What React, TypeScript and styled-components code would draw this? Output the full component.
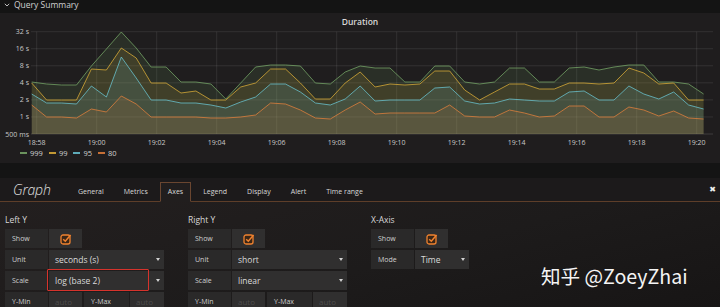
import styled, { createGlobalStyle } from "styled-components"

const GlobalStyle = createGlobalStyle`
  html, body {
    margin: 0;
    padding: 0;
    background: #141414;
  }
  body {
    width: 720px;
    height: 307px;
    overflow: hidden;
    font-family: "Open Sans", "Liberation Sans", sans-serif;
    color: #d8d8d8;
  }
`

// chart geometry (page pixels)
const PLOT_TOP = 31.7
const PLOT_BOTTOM = 134
const PLOT_LEFT = 31
const PLOT_RIGHT = 713
const STEP_Y = (PLOT_BOTTOM - PLOT_TOP) / 6
const FIRST_X = 31.7
const STEP_X = 14.93

const yTicks = ["32 s", "16 s", "8 s", "4 s", "2 s", "1 s", "500 ms"]
const xTicks = [
  "18:58", "19:00", "19:02", "19:04", "19:06", "19:08",
  "19:10", "19:12", "19:14", "19:16", "19:18", "19:20",
]

// y positions of each sample (one every 30s), read off the log2 scale
const series = [
  {
    name: "999",
    color: "#7eb26d",
    points: [82, 84, 85, 85, 66, 49, 32, 48, 67, 67, 82, 82, 84, 99, 83, 67, 65, 65, 66, 83, 84, 72, 66, 68, 68, 82, 82, 66, 66, 82, 84, 82, 68, 68, 82, 82, 68, 67, 70, 67, 65, 65, 82, 82, 84, 94],
  },
  {
    name: "99",
    color: "#eab839",
    points: [83, 100, 100, 100, 69, 70, 48, 58, 83, 83, 93, 91, 100, 100, 87, 83, 69, 69, 83, 99, 99, 83, 72, 87, 84, 85, 84, 71, 71, 90, 100, 92, 84, 84, 89, 89, 83, 83, 84, 83, 68, 73, 84, 83, 100, 100],
  },
  {
    name: "95",
    color: "#6ed0e0",
    points: [94, 103, 103, 104, 86, 97, 57, 78, 100, 100, 103, 103, 105, 108, 102, 97, 84, 84, 92, 103, 105, 99, 86, 101, 100, 100, 100, 88, 87, 101, 104, 103, 99, 100, 101, 101, 92, 91, 100, 100, 86, 94, 99, 92, 105, 109],
  },
  {
    name: "80",
    color: "#ef843c",
    points: [105, 117, 117, 118, 109, 112, 96, 104, 117, 117, 117, 117, 118, 118, 117, 115, 103, 104, 110, 118, 119, 110, 102, 114, 113, 113, 113, 113, 105, 116, 117, 117, 110, 113, 117, 116, 106, 106, 117, 117, 107, 110, 116, 111, 118, 119],
  },
]

const QueryRow = styled.div`
  display: flex;
  align-items: center;
  gap: 4px;
  height: 9px;
  margin-bottom: 4px;
  padding-left: 4px;
  font-size: 8.5px;
  line-height: 9px;
  color: #d0d0d0;
`

const Panel = styled.section`
  height: 150px;
  background: #1f1d1e;
  display: flex;
  flex-direction: column;
`

const PanelTitle = styled.div`
  padding-top: 3px;
  height: 12px;
  line-height: 12px;
  text-align: center;
  font-size: 8.5px;
  font-weight: 600;
  color: #d8d8d8;
`

const ChartSvg = styled.svg`
  display: block;
  width: 720px;
  height: 119px;
`

const Legend = styled.div`
  display: flex;
  align-items: center;
  height: 12px;
  padding-left: 20px;
  gap: 4px;
  font-size: 7.5px;
  color: #d0d0d0;
`

const LegendItem = styled.div`
  display: flex;
  align-items: center;
  gap: 3px;
  margin-right: 2px;
`

const LegendSwatch = styled.span<{ $color: string }>`
  width: 7px;
  height: 2px;
  background: ${(p) => p.$color};
  opacity: 0.8;
`

const Editor = styled.section`
  margin-top: 15px;
`

const EditorHeader = styled.div`
  display: flex;
  align-items: flex-end;
  height: 23px;
  background: #1c1a1b;
  border-bottom: 1px solid #5e3e29;
`

const EditorTitle = styled.div`
  width: 70px;
  padding-left: 13px;
  box-sizing: border-box;
  align-self: center;
  font-size: 14px;
  letter-spacing: -0.2px;
  font-style: italic;
  font-weight: 300;
  color: #e0e0e0;
`

const Tab = styled.div<{ $active?: boolean }>`
  height: 18px;
  line-height: 18px;
  padding: 0 7px;
  margin-right: 4px;
  margin-bottom: -1px;
  font-size: 7px;
  color: #d8d8d8;
  border: 1px solid ${(p) => (p.$active ? "#6a4630" : "transparent")};
  border-bottom: 1px solid ${(p) => (p.$active ? "#211e1e" : "transparent")};
  background: ${(p) => (p.$active ? "#211e1e" : "transparent")};
`

const CloseButton = styled.div`
  margin-left: auto;
  align-self: center;
  padding-right: 4px;
  font-family: "DejaVu Sans", sans-serif;
  font-size: 8px;
  font-weight: bold;
  color: #f0f0f0;
`

const EditorBody = styled.div`
  position: relative;
  display: flex;
  gap: 24px;
  height: 105px;
  padding: 0 5px;
  background: linear-gradient(165deg, #231f1f 0%, #1d1b1b 55%, #171515 100%);
`

const Section = styled.div`
  width: 159px;
`

const SectionTitle = styled.div`
  margin-top: 12px;
  margin-bottom: 3px;
  height: 12px;
  line-height: 12px;
  font-size: 8.5px;
  color: #d8d8d8;
`

const FormRow = styled.div`
  display: flex;
  gap: 1px;
  height: 19px;
  margin-bottom: 2px;
`

const FormLabel = styled.div<{ $width?: number; $gap?: number }>`
  width: ${(p) => p.$width ?? 43}px;
  margin-left: ${(p) => p.$gap ?? 0}px;
  padding-left: 7px;
  box-sizing: border-box;
  line-height: 19px;
  font-size: 7px;
  color: #cfcfcf;
  background: #2a2929;
`

const FormField = styled.div<{ $width: number }>`
  position: relative;
  width: ${(p) => p.$width}px;
  box-sizing: border-box;
  padding-left: 6px;
  line-height: 19px;
  font-size: 8.5px;
  color: #dadada;
  background: #302f2f;
`

const Select = styled(FormField)`
  &::after {
    content: "";
    position: absolute;
    right: 4px;
    top: 8px;
    border-left: 2.5px solid transparent;
    border-right: 2.5px solid transparent;
    border-top: 3px solid #d0d0d0;
  }
`

const Placeholder = styled.span`
  color: #4e4c4c;
  font-size: 8px;
`

const CheckCell = styled(FormField)`
  display: flex;
  align-items: center;
  justify-content: center;
  padding-left: 0;
`

const Highlight = styled.span`
  position: absolute;
  left: -2px;
  top: -2px;
  width: 102px;
  height: 22px;
  box-sizing: border-box;
  border: 1.5px solid #d6332c;
  border-radius: 1px;
`

const Watermark = styled.div`
  position: absolute;
  left: 541px;
  top: 59px;
  font-family: "Noto Sans CJK SC", "Noto Sans", sans-serif;
  font-size: 19.6px;
  color: #f4f4f4;
  white-space: nowrap;
`

const Chevron = () => (
  <svg width="6" height="4" viewBox="0 0 6 4">
    <path d="M0.8 0.8 L3 3 L5.2 0.8" fill="none" stroke="#bdbdbd" strokeWidth="1" />
  </svg>
)

const Checkbox = () => (
  <svg width="12" height="12" viewBox="0 0 12 12">
    <rect x="1" y="2" width="9" height="9" rx="2" fill="#3b2616" stroke="#f0822f" strokeWidth="1.3" />
    <path d="M3.2 6.2 L5.3 8.2 L10.6 2" fill="none" stroke="#f0822f" strokeWidth="1.5" />
  </svg>
)

const xAt = (i: number) => FIRST_X + i * STEP_X

const linePath = (points: number[]) =>
  points.map((y, i) => `${i === 0 ? "M" : "L"}${xAt(i).toFixed(1)} ${y}`).join(" ")

const areaPath = (points: number[]) =>
  `${linePath(points)} L${xAt(points.length - 1).toFixed(1)} ${PLOT_BOTTOM} L${xAt(0).toFixed(1)} ${PLOT_BOTTOM} Z`

const DurationChart = () => (
  // viewBox uses page coordinates: chart spans y 28..147
  <ChartSvg viewBox="0 28 720 119">
    {yTicks.map((label, i) => {
      const y = PLOT_TOP + i * STEP_Y
      return (
        <g key={label}>
          <line x1={PLOT_LEFT} x2={PLOT_RIGHT} y1={y} y2={y} stroke="#ffffff" strokeOpacity={i === 6 ? 0.14 : 0.09} />
          <text x={29} y={y + 2.5} textAnchor="end" fontSize="7" fill="#c8c8c8">
            {label}
          </text>
        </g>
      )
    })}
    {xTicks.map((label, i) => {
      const x = 36.7 + i * 60
      return (
        <g key={label}>
          <line x1={x} x2={x} y1={PLOT_TOP} y2={PLOT_BOTTOM} stroke="#ffffff" strokeOpacity="0.09" />
          <text x={x} y={144.5} textAnchor="middle" fontSize="7" fill="#c8c8c8">
            {label}
          </text>
        </g>
      )
    })}
    {series.map((s) => (
      <path key={`fill-${s.name}`} d={areaPath(s.points)} fill={s.color} fillOpacity="0.12" />
    ))}
    {series.map((s) => (
      <path key={`line-${s.name}`} d={linePath(s.points)} fill="none" stroke={s.color} strokeOpacity="0.7" strokeWidth="1" />
    ))}
  </ChartSvg>
)

const App = () => {
  return (
    <>
      <GlobalStyle />
      <QueryRow>
        <Chevron />
        Query Summary
      </QueryRow>
      <Panel>
        <PanelTitle>Duration</PanelTitle>
        <DurationChart />
        <Legend>
          {series.map((s) => (
            <LegendItem key={s.name}>
              <LegendSwatch $color={s.color} />
              {s.name}
            </LegendItem>
          ))}
        </Legend>
      </Panel>
      <Editor>
        <EditorHeader>
          <EditorTitle>Graph</EditorTitle>
          <Tab>General</Tab>
          <Tab>Metrics</Tab>
          <Tab $active>Axes</Tab>
          <Tab>Legend</Tab>
          <Tab>Display</Tab>
          <Tab>Alert</Tab>
          <Tab>Time range</Tab>
          <CloseButton>✖</CloseButton>
        </EditorHeader>
        <EditorBody>
          <Section>
            <SectionTitle>Left Y</SectionTitle>
            <FormRow>
              <FormLabel>Show</FormLabel>
              <CheckCell $width={33}>
                <Checkbox />
              </CheckCell>
            </FormRow>
            <FormRow>
              <FormLabel>Unit</FormLabel>
              <Select $width={115}>seconds (s)</Select>
            </FormRow>
            <FormRow>
              <FormLabel>Scale</FormLabel>
              <Select $width={115}>
                log (base 2)
                <Highlight />
              </Select>
            </FormRow>
            <FormRow>
              <FormLabel>Y-Min</FormLabel>
              <FormField $width={33}>
                <Placeholder>auto</Placeholder>
              </FormField>
              <FormLabel $width={45} $gap={1}>Y-Max</FormLabel>
              <FormField $width={34}>
                <Placeholder>auto</Placeholder>
              </FormField>
            </FormRow>
          </Section>
          <Section>
            <SectionTitle>Right Y</SectionTitle>
            <FormRow>
              <FormLabel>Show</FormLabel>
              <CheckCell $width={33}>
                <Checkbox />
              </CheckCell>
            </FormRow>
            <FormRow>
              <FormLabel>Unit</FormLabel>
              <Select $width={115}>short</Select>
            </FormRow>
            <FormRow>
              <FormLabel>Scale</FormLabel>
              <Select $width={115}>linear</Select>
            </FormRow>
            <FormRow>
              <FormLabel>Y-Min</FormLabel>
              <FormField $width={33}>
                <Placeholder>auto</Placeholder>
              </FormField>
              <FormLabel $width={45} $gap={1}>Y-Max</FormLabel>
              <FormField $width={34}>
                <Placeholder>auto</Placeholder>
              </FormField>
            </FormRow>
          </Section>
          <Section>
            <SectionTitle>X-Axis</SectionTitle>
            <FormRow>
              <FormLabel>Show</FormLabel>
              <CheckCell $width={33}>
                <Checkbox />
              </CheckCell>
            </FormRow>
            <FormRow>
              <FormLabel>Mode</FormLabel>
              <Select $width={54}>Time</Select>
            </FormRow>
          </Section>
          <Watermark>知乎 @ZoeyZhai</Watermark>
        </EditorBody>
      </Editor>
    </>
  )
}

export default App
